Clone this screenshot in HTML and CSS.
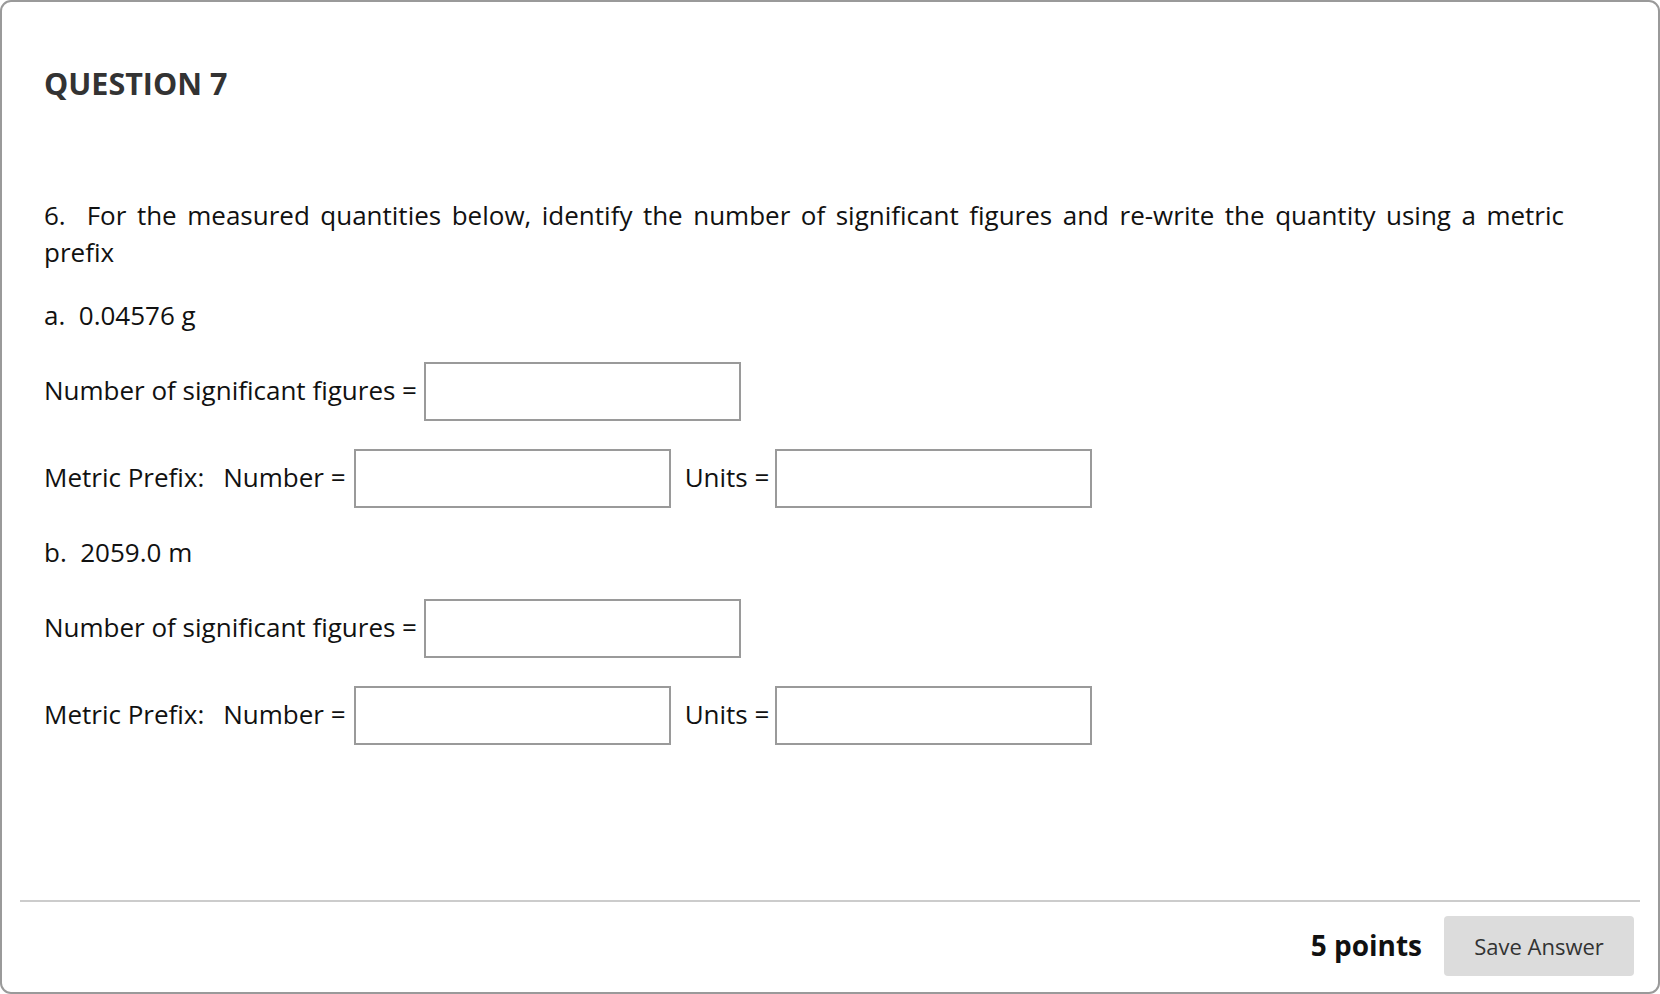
FILE: index.html
```html
<!DOCTYPE html>
<html lang="en">
<head>
<meta charset="utf-8">
<title>Question 7</title>
<link rel="stylesheet" href="styles.css">
</head>
<body>
<div class="card">
  <div class="card-body">
    <h2 class="title">QUESTION 7</h2>
    <p class="question">6.&nbsp; For the measured quantities below, identify the number of significant figures and re-write the quantity using a metric prefix</p>

    <p class="part">a.&nbsp; 0.04576 g</p>
    <div class="row">
      <span class="label">Number of significant figures =</span>
      <input class="box" type="text">
    </div>
    <div class="row">
      <span class="label">Metric Prefix:</span>
      <span class="label sub">Number =</span>
      <input class="box" type="text">
      <span class="label units">Units =</span>
      <input class="box" type="text">
    </div>

    <p class="part">b.&nbsp; 2059.0 m</p>
    <div class="row">
      <span class="label">Number of significant figures =</span>
      <input class="box" type="text">
    </div>
    <div class="row">
      <span class="label">Metric Prefix:</span>
      <span class="label sub">Number =</span>
      <input class="box" type="text">
      <span class="label units">Units =</span>
      <input class="box" type="text">
    </div>
  </div>
  <div class="card-footer">
    <span class="points">5 points</span>
    <button class="save" type="button">Save Answer</button>
  </div>
</div>
</body>
</html>
```

FILE: styles.css
```css
html, body {
  margin: 0;
  padding: 0;
  background: #ffffff;
}

body {
  font-family: "Open Sans", "Noto Sans", "Liberation Sans", sans-serif;
  color: #111111;
}

.card {
  box-sizing: border-box;
  width: 1660px;
  height: 994px;
  border: 2px solid #9a9a9a;
  border-radius: 11px;
  display: flex;
  flex-direction: column;
  background: #ffffff;
}

.card-body {
  flex: 1;
  padding: 0 94px 0 42px;
}

.title {
  margin: 61px 0 0;
  font-size: 30.5px;
  line-height: 40px;
  font-weight: 700;
  color: #333333;
}

.question {
  margin: 94px 0 0;
  font-size: 26px;
  line-height: 37px;
  text-align: justify;
}

.part {
  margin: 26px 0 0;
  font-size: 26px;
  line-height: 37px;
}

.row {
  display: flex;
  align-items: center;
  margin-top: 28px;
  font-size: 26px;
  line-height: 37px;
}

.label {
  white-space: nowrap;
  margin-right: 7px;
  position: relative;
  top: -1px;
}

.sub {
  margin-left: 12px;
  margin-right: 8px;
}

.units {
  margin-left: 14px;
  margin-right: 6px;
}

.box {
  box-sizing: border-box;
  width: 317px;
  height: 59px;
  border: 2px solid #9a9a9a;
  border-radius: 0;
  margin: 0;
  padding: 0 8px;
  font: inherit;
  background: #ffffff;
}

.card-footer {
  margin: 0 18px;
  border-top: 2px solid #cccccc;
  padding: 14px 6px 16px 0;
  display: flex;
  justify-content: flex-end;
  align-items: center;
  gap: 22px;
}

.points {
  font-size: 28px;
  font-weight: 700;
  color: #111111;
  position: relative;
  top: -1px;
}

.save {
  width: 190px;
  height: 60px;
  border: none;
  border-radius: 4px;
  background: #dcdcdc;
  color: #333333;
  font-family: "Open Sans", "Noto Sans", "Liberation Sans", sans-serif;
  font-size: 22px;
  padding: 0;
}
```
